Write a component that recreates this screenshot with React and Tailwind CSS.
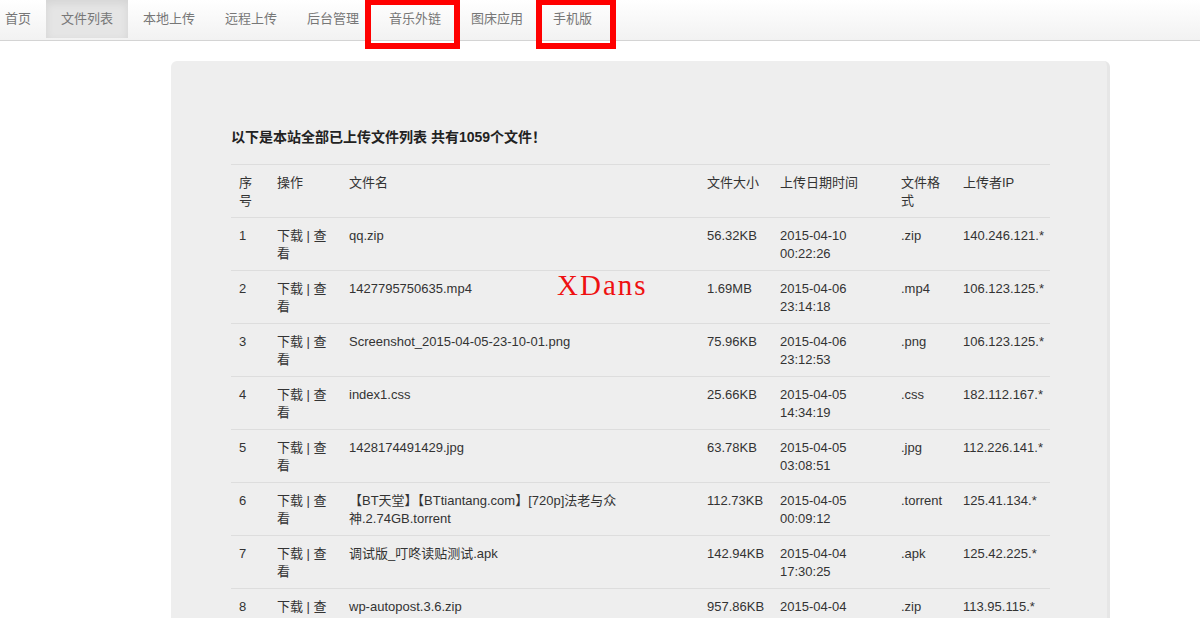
import React from "react";

const navItems = ["首页", "文件列表", "本地上传", "远程上传", "后台管理", "音乐外链", "图床应用", "手机版"];

const rows = [
  ["1", "qq.zip", "56.32KB", "2015-04-10", "00:22:26", ".zip", "140.246.121.*"],
  ["2", "1427795750635.mp4", "1.69MB", "2015-04-06", "23:14:18", ".mp4", "106.123.125.*"],
  ["3", "Screenshot_2015-04-05-23-10-01.png", "75.96KB", "2015-04-06", "23:12:53", ".png", "106.123.125.*"],
  ["4", "index1.css", "25.66KB", "2015-04-05", "14:34:19", ".css", "182.112.167.*"],
  ["5", "1428174491429.jpg", "63.78KB", "2015-04-05", "03:08:51", ".jpg", "112.226.141.*"],
  ["6", "【BT天堂】【BTtiantang.com】[720p]法老与众|神.2.74GB.torrent", "112.73KB", "2015-04-05", "00:09:12", ".torrent", "125.41.134.*"],
  ["7", "调试版_叮咚读贴测试.apk", "142.94KB", "2015-04-04", "17:30:25", ".apk", "125.42.225.*"],
  ["8", "wp-autopost.3.6.zip", "957.86KB", "2015-04-04", "12:01:44", ".zip", "113.95.115.*"],
];

const font = { fontFamily: '"Liberation Sans", Arial, "Noto Sans CJK SC", sans-serif' };

export default function App() {
  return (
    <div className="relative w-[1200px] h-[618px] overflow-hidden bg-white text-[13px] leading-[18px] text-[#333]" style={font}>
      {/* navbar */}
      <div className="h-[41px] border-b border-[#d4d4d4] bg-gradient-to-b from-white to-[#f2f2f2] flex">
        <div className="flex -ml-[10px]">
          {navItems.map((t, i) => (
            <div
              key={t}
              className={
                "relative h-[38px] px-[15px] pt-[10px] text-[#777] whitespace-nowrap " +
                (i === 1 ? "bg-[#e5e5e5] text-[#555] shadow-[inset_0_3px_8px_rgba(0,0,0,0.08)]" : "")
              }
            >
              {t}
              {i === 5 && (
                <div className="absolute -left-[9px] -right-[4px] top-0 h-[49px] border-[6px] border-[#f00] border-t-[5px]" />
              )}
              {i === 7 && (
                <div className="absolute -left-[2px] -right-[9px] top-0 h-[49px] border-[6px] border-[#f00] border-t-[5px]" />
              )}
            </div>
          ))}
        </div>
      </div>

      {/* panel */}
      <div className="ml-[171px] mt-[20px] w-[939px] h-[600px] rounded-[6px] bg-[#eeeeee] px-[60px] pt-[66px] border-r-[3px] border-[#e6e6e6]">
        <div className="font-bold text-[#222] text-[14px] h-[18px] pt-px">以下是本站全部已上传文件列表 共有1059个文件！</div>
        <table className="mt-[19px] w-[819px] table-fixed border-collapse">
          <colgroup>
            <col className="w-[38px]" />
            <col className="w-[72px]" />
            <col className="w-[358px]" />
            <col className="w-[73px]" />
            <col className="w-[121px]" />
            <col className="w-[62px]" />
            <col className="w-[95px]" />
          </colgroup>
          <thead>
            <tr className="border-t border-[#dddddd] text-left align-top">
              <th className="font-normal pt-[9px] pb-[7px] px-[8px] h-[52px]">序<br />号</th>
              <th className="font-normal pt-[9px] pb-[7px] px-[8px]">操作</th>
              <th className="font-normal pt-[9px] pb-[7px] px-[8px]">文件名</th>
              <th className="font-normal pt-[9px] pb-[7px] px-[8px]">文件大小</th>
              <th className="font-normal pt-[9px] pb-[7px] px-[8px]">上传日期时间</th>
              <th className="font-normal pt-[9px] pb-[7px] px-[8px]">文件格<br />式</th>
              <th className="font-normal pt-[9px] pb-[7px] px-[8px]">上传者IP</th>
            </tr>
          </thead>
          <tbody>
            {rows.map((r) => (
              <tr key={r[0]} className="border-t border-[#dddddd] align-top">
                <td className="pt-[9px] pb-[7px] px-[8px] h-[52px]">{r[0]}</td>
                <td className="pt-[9px] pb-[7px] px-[8px] whitespace-nowrap">下载 | 查<br />看</td>
                <td className="pt-[9px] pb-[7px] px-[8px] whitespace-nowrap">
                  {r[1].split("|").map((s, k) => (
                    <div key={k}>{s}</div>
                  ))}
                </td>
                <td className="pt-[9px] pb-[7px] px-[8px]">{r[2]}</td>
                <td className="pt-[9px] pb-[7px] px-[8px]">{r[3]}<br />{r[4]}</td>
                <td className="pt-[9px] pb-[7px] px-[8px]">{r[5]}</td>
                <td className="pt-[9px] pb-[7px] px-[8px] whitespace-nowrap">{r[6]}</td>
              </tr>
            ))}
          </tbody>
        </table>
      </div>

      {/* watermark */}
      <div
        className="absolute left-[557px] top-[267px] text-[29px] leading-[36px] tracking-[2px] text-[#ee1111]"
        style={{ fontFamily: '"Liberation Serif", "Times New Roman", serif' }}
      >
        XDans
      </div>
    </div>
  );
}
